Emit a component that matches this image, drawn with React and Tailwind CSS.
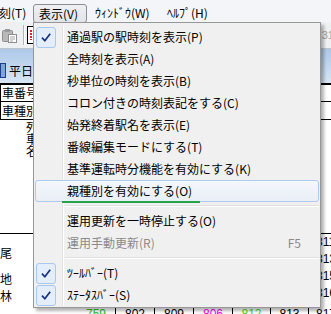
import React from "react";

const menuItems = [
  { label: "通過駅の駅時刻を表示(P)", checked: true },
  { label: "全時刻を表示(A)" },
  { label: "秒単位の時刻を表示(B)" },
  { label: "コロン付きの時刻表記をする(C)" },
  { label: "始発終着駅名を表示(E)" },
  { label: "番線編集モードにする(T)" },
  { label: "基準運転時分機能を有効にする(K)" },
  { label: "親種別を有効にする(O)", hover: true },
  { sep: true },
  { label: "運用更新を一時停止する(O)" },
  { label: "運用手動更新(R)", disabled: true, shortcut: "F5" },
  { sep: true },
  { label: "ﾂｰﾙﾊﾞｰ(T)", checked: true },
  { label: "ｽﾃｰﾀｽﾊﾞｰ(S)", checked: true },
];

// lower timetable columns (only the bottom row and the right edge show)
const columns = [
  { w: "w-[38px]", border: false, vals: ["751", "753", "755", "757", "759"], color: "text-[#2fc42f]" },
  { w: "w-[39px]", border: true, vals: ["796", "798", "800", "801", "802"], color: "text-black" },
  { w: "w-[39px]", border: true, vals: ["803", "805", "807", "808", "809"], color: "text-black" },
  { w: "w-[39px]", border: true, vals: ["800", "802", "804", "805", "806"], color: "text-[#ff00ff]" },
  { w: "w-[38px]", border: true, vals: ["806", "808", "810", "811", "812"], color: "text-[#55d622]" },
  { w: "w-[38px]", border: true, vals: ["807", "809", "811", "812", "813"], color: "text-black" },
  { w: "w-[39px]", border: true, vals: ["811", "813", "815", "816", "817"], color: "text-black", left: true },
];

function Check() {
  return (
    <div className="ml-[1px] flex h-[21px] w-[20px] items-center justify-center rounded-[3px] border border-[#a9c8ee] bg-[#e4eefa]">
      <svg width="10" height="9" viewBox="0 0 10 9">
        <path d="M1 4.6 L3.8 7.8 L9.2 0.8" fill="none" stroke="#14307f" strokeWidth="1.7" strokeLinejoin="round" />
      </svg>
    </div>
  );
}

function MenuRow({ item }) {
  if (item.sep) {
    return (
      <div className="flex h-[8px]">
        <div className="w-[28px] shrink-0 border-r border-[#e2e3e3]" />
        <div className="w-px shrink-0 bg-white" />
        <div className="flex flex-1 flex-col justify-center pl-[1px]">
          <div className="h-px bg-[#e0e0e0]" />
          <div className="h-px bg-white" />
        </div>
      </div>
    );
  }

  if (item.hover) {
    return (
      <div className="relative flex h-[22px] items-center rounded-[3px] border border-[#aecbef] bg-gradient-to-b from-[#f4f7fb] to-[#e9eff7]">
        <div className="w-[27px] shrink-0" />
        <div className="w-px shrink-0" />
        <span className="pl-[3px] leading-[20px]">{item.label}</span>
        <div className="absolute bottom-[-2px] left-[26px] h-[2px] w-[138px] bg-[#27a445]" />
      </div>
    );
  }

  return (
    <div className="flex h-[22px] items-center">
      <div className="flex h-full w-[28px] shrink-0 items-center border-r border-[#e2e3e3]">
        {item.checked && <Check />}
      </div>
      <div className="h-full w-px shrink-0 bg-white" />
      <span className={`pl-[3px] leading-[22px] ${item.disabled ? "text-[#8a8a8a]" : "text-black"}`}>{item.label}</span>
      {item.shortcut && <span className="ml-auto pr-[18px] leading-[22px] text-[#8a8a8a]">{item.shortcut}</span>}
    </div>
  );
}

function ViewMenu() {
  return (
    <div className="absolute left-[33px] top-[22px] w-[288px] border border-[#979797] bg-[#f0f0f0] px-[1px] pb-[1px] pt-[3px] shadow-[3px_3px_3px_rgba(0,0,0,0.3)]">
      {menuItems.map((item, i) => (
        <MenuRow key={i} item={item} />
      ))}
    </div>
  );
}

function MenuBar() {
  return (
    <div className="flex h-[22px] bg-[#f3f5f8] pt-[4px]">
      <div className="-ml-[1px] w-[34px] leading-[18px]">刻(T)</div>
      <div className="flex h-[19px] w-[54px] items-center rounded-[3px] border border-[#8a8d91] bg-gradient-to-b from-[#eef0f3] to-[#e1e4e8] pl-[5px]">
        表示(V)
      </div>
      <div className="w-[73px] pl-[8px] leading-[18px]">ｳｨﾝﾄﾞｳ(W)</div>
      <div className="pl-[7px] leading-[18px]">ﾍﾙﾌﾟ(H)</div>
    </div>
  );
}

function Toolbar() {
  return (
    <div className="flex h-[27px] items-center border-b border-[#bcc4cc] bg-[#eef0f2]">
      <svg className="ml-[2px]" width="15" height="15" viewBox="0 0 15 15">
        <rect x="0.5" y="2.5" width="10" height="11" rx="1" fill="#b9b9b9" stroke="#8e8e8e" />
        <rect x="3" y="1" width="5" height="3" rx="0.5" fill="#9a9a9a" />
        <rect x="6.5" y="6.5" width="8" height="8" fill="#ffffff" stroke="#8e8e8e" />
        <path d="M8 9h5M8 11h5M8 13h3" stroke="#a6a6a6" />
      </svg>
      <div className="ml-[6px] h-[20px] w-px bg-[#b5b5b5]" />
      <div className="h-[20px] w-px bg-white" />
      <div className="ml-[2px] flex h-[18px] w-[70px] items-center border border-black bg-white pl-[2px]">
        <div className="h-[10px] w-[2px] bg-[repeating-linear-gradient(to_bottom,#e02020_0,#e02020_2px,transparent_2px,transparent_3px)]" />
      </div>
      <span className="ml-auto -mr-[3px] font-['Liberation_Sans',sans-serif] text-[11px] text-[#a0a0a0]">31</span>
    </div>
  );
}

function Band() {
  return (
    <div className="flex h-[34px] items-end bg-gradient-to-b from-[#adc8e7] to-[#d8e6f5] pb-[4px]">
      <div className="mb-[1px] h-[15px] w-[6px] border border-[#1d3f86] bg-[#7fa6d8]" />
      <span className="ml-[3px] leading-[16px]">平日</span>
    </div>
  );
}

function Table() {
  return (
    <div>
      <div className="h-[2px] bg-black" />
      <div className="flex h-[17px] items-center border-b border-l border-black pl-[1px] leading-[16px]">車番号</div>
      <div className="flex h-[18px] items-center border-b border-l border-black pl-[1px] leading-[16px]">車種別</div>
      <div className="flex h-[113px] flex-col pl-[26px] pt-[1px] leading-[12px]">
        <span>列</span>
        <span>車</span>
        <span>名</span>
      </div>
      <div className="h-px bg-black" />
      <div className="flex">
        <div className="flex w-[77px] shrink-0 flex-col leading-[17px]">
          <div className="flex h-[36px] items-center">尾</div>
          <div className="h-[17px]">地</div>
          <div className="h-[17px]">林</div>
          <div className="h-[18px]" />
          <div className="flex h-[17px] items-center justify-end pr-[3px]">
            <span>着</span>
            <span className="h-[13px] w-[2px] bg-black" />
          </div>
        </div>
        {columns.map((col, i) => (
          <div
            key={i}
            className={`flex shrink-0 flex-col font-['Liberation_Sans',sans-serif] text-[12px] ${col.w} ${col.border ? "border-l border-black" : ""}`}
          >
            {col.vals.map((v, j) => (
              <div
                key={j}
                className={`leading-[17px] ${j === 3 ? "h-[21px]" : "h-[17px]"} ${col.left ? "pl-[7px]" : "text-center"} ${j === 4 ? col.color : "text-black"}`}
              >
                {v}
              </div>
            ))}
          </div>
        ))}
      </div>
    </div>
  );
}

export default function App() {
  return (
    <div className="relative h-[314px] w-[331px] overflow-hidden bg-white font-['Noto_Sans_CJK_JP','Noto_Sans',sans-serif] text-[12px] text-black">
      <MenuBar />
      <Toolbar />
      <Band />
      <Table />
      <ViewMenu />
    </div>
  );
}
